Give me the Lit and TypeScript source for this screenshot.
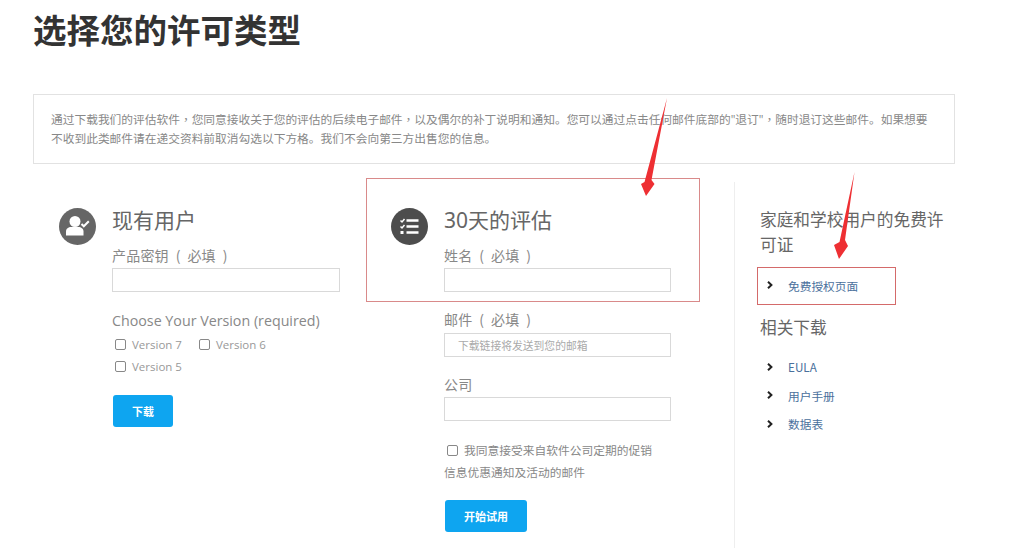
import { LitElement, html, css, svg } from "lit";
import { customElement } from "lit/decorators.js";

const chevron = html`<svg class="chev" viewBox="0 0 6 8" width="6" height="8"><path d="M1 .8 4.400 4 1 7.200" fill="none" stroke="#222" stroke-width="2"/></svg>`;
const comma = html`<span class="tc">，</span>`;

@customElement("app-root")
export class AppRoot extends LitElement {
  static styles = css`
    :host {
      display: block;
      position: relative;
      width: 1024px;
      height: 548px;
      overflow: hidden;
      background: #fff;
      font-family: "Open Sans", "Noto Sans CJK SC", sans-serif;
      color: #777;
    }
    * { box-sizing: border-box; }
    .page { padding: 9px 0 0 33px; width: 955px; }
    h1 {
      margin: 0;
      font-family: "Noto Sans CJK SC", sans-serif;
      font-size: 33.500px;
      line-height: 40px;
      font-weight: 700;
      color: #333;
    }
    .notice {
      margin-top: 45px;
      height: 70px;
      border: 1px solid #e2e2e2;
      padding: 15px 17px 0;
      font-size: 11.720px;
      line-height: 18.600px;
      color: #888;
      font-family: "Open Sans", "Noto Sans CJK SC", sans-serif;
      white-space: nowrap;
    }
    .tc { font-family: "Noto Sans CJK TC", sans-serif; }
    .cols { display: grid; grid-template-columns: 333px 368px 221px; margin-top: 18px; height: 366px; }
    .col { display: flex; gap: 16px; align-items: flex-start; padding-left: 26px; padding-top: 26px; }
    .col + .col { padding-left: 25px; }
    .icon { flex: none; width: 37px; height: 37px; display: block; }
    .form { width: 228px; display: flex; flex-direction: column; align-items: flex-start; margin-top: -1px; }
    .mid .form { width: 227px; }
    h2 {
      margin: 0;
      font-size: 21px;
      line-height: 26px;
      font-weight: 400;
      color: #666;
      font-family: "Noto Sans", "Noto Sans CJK SC", sans-serif;
    }
    .label {
      margin-top: 11px;
      font-size: 14px;
      line-height: 22px;
      color: #888;
      font-family: "Noto Sans CJK SC", sans-serif;
      letter-spacing: .2px;
      word-spacing: 3.500px;
    }
    .label.next { margin-top: 16px; }
    .field {
      display: block;
      margin-top: 2px;
      width: 100%;
      height: 24px;
      border: 1px solid #d9d9d9;
      background: #fff;
      padding: 0 13px;
      font-size: 10.800px;
      line-height: 22px;
      color: #aaa;
      font-family: "Noto Sans CJK SC", sans-serif;
    }
    .field.low { margin-top: 3px; }
    .choose { margin-top: 18px; font-size: 14.250px; line-height: 22px; color: #888; font-weight: 400; }
    .checks { display: flex; flex-wrap: wrap; width: 228px; padding-left: 3px; margin-top: 1px; }
    .check { display: flex; align-items: center; gap: 6px; height: 22px; font-size: 11.500px; color: #999; margin-right: 17px; }
    .box { flex: none; width: 11px; height: 11px; border: 1px solid #888; border-radius: 2px; background: #fff; }
    .break { flex-basis: 100%; height: 0; }
    .btn {
      display: flex; align-items: center; justify-content: center;
      height: 32px; background: #0ea5f0; color: #fff; border-radius: 3px;
      font-size: 11px; font-weight: 700; font-family: "Noto Sans CJK SC", sans-serif;
      margin-left: 1px;
    }
    .btn.small { width: 60px; margin-top: 18px; }
    .btn.wide { width: 82px; margin-top: 17px; }
    .agree { margin-top: 18px; font-size: 11.750px; line-height: 22px; color: #888; font-family: "Noto Sans CJK SC", sans-serif; width: 100%; }
    .agree .row { display: flex; align-items: center; gap: 6px; padding-left: 3px; }
    .side { border-left: 1px solid #eee; padding: 25px 0 0 25px; }
    h3 { margin: 0; font-size: 16.700px; line-height: 25px; font-weight: 400; color: #666; font-family: "Noto Sans CJK SC", sans-serif; }
    ul { list-style: none; margin: 0; padding: 0 0 0 7px; }
    li { display: flex; align-items: center; height: 28.500px; font-size: 11.700px; color: #4a709c; font-family: "Noto Sans CJK SC", sans-serif; }
    .chev { margin-right: 15px; flex: none; }
    .free { margin: 14px 0 15px; }
    h3.dl { margin-bottom: 13px; }
    .mark { position: absolute; border: 1.500px solid #d98a8a; pointer-events: none; }
    .mark.one { left: 366px; top: 178px; width: 334px; height: 124px; }
    .mark.two { left: 757px; top: 267px; width: 139px; height: 38px; border-color: #d46a6a; }
    .arrows { position: absolute; inset: 0; width: 1024px; height: 548px; pointer-events: none; }
  `;

  render() {
    return html`
      <div class="page">
        <h1>选择您的许可类型</h1>
        <div class="notice">通过下载我们的评估软件${comma}您同意接收关于您的评估的后续电子邮件${comma}以及偶尔的补丁说明和通知。您可以通过点击任何邮件底部的"退订"${comma}随时退订这些邮件。如果想要<br />不收到此类邮件请在递交资料前取消勾选以下方格。我们不会向第三方出售您的信息。</div>
        <div class="cols">
          <section class="col">
            <svg class="icon" viewBox="0 0 37 37">
              <circle cx="18.500" cy="18.500" r="18.500" fill="#666"/>
              <circle cx="16" cy="13.500" r="5.500" fill="#fff"/>
              <path d="M7 27.500v-4c0-3 2.500-4.500 5-4.500h7.500c2.500 0 5 1.500 5 4.500v4z" fill="#fff"/>
              <path d="M22.500 16l2.300 2.300 5-5" fill="none" stroke="#fff" stroke-width="2"/>
            </svg>
            <div class="form">
              <h2>现有用户</h2>
              <div class="label">产品密钥 ( 必填 )</div>
              <div class="field"></div>
              <div class="choose">Choose Your Version (required)</div>
              <div class="checks">
                <div class="check"><span class="box"></span>Version 7</div>
                <div class="check"><span class="box"></span>Version 6</div>
                <div class="break"></div>
                <div class="check"><span class="box"></span>Version 5</div>
              </div>
              <div class="btn small">下载</div>
            </div>
          </section>
          <section class="col mid">
            <svg class="icon" viewBox="0 0 37 37">
              <circle cx="18.500" cy="18.500" r="18.500" fill="#4d4d4d"/>
              <g fill="none" stroke="#fff">
                <path d="M15.500 12.500h12M15.500 18.500h12M15.500 24.500h12" stroke-width="2.400"/>
                <path d="M9.500 12.500l1.500 1.500 2.500-3M9.500 18.500l1.500 1.500 2.500-3" stroke-width="1.500"/>
              </g>
              <rect x="9.500" y="23" width="3" height="3" fill="#fff"/>
            </svg>
            <div class="form">
              <h2>30天的评估</h2>
              <div class="label">姓名 ( 必填 )</div>
              <div class="field"></div>
              <div class="label next">邮件 ( 必填 )</div>
              <div class="field low">下载链接将发送到您的邮箱</div>
              <div class="label next">公司</div>
              <div class="field"></div>
              <div class="agree">
                <div class="row"><span class="box"></span>我同意接受来自软件公司定期的促销</div>
                <div>信息优惠通知及活动的邮件</div>
              </div>
              <div class="btn wide">开始试用</div>
            </div>
          </section>
          <aside class="side">
            <h3>家庭和学校用户的免费许可证</h3>
            <ul class="free"><li>${chevron}免费授权页面</li></ul>
            <h3 class="dl">相关下载</h3>
            <ul>
              <li>${chevron}EULA</li>
              <li>${chevron}用户手册</li>
              <li>${chevron}数据表</li>
            </ul>
          </aside>
        </div>
      </div>
      <div class="mark one"></div>
      <div class="mark two"></div>
      <svg class="arrows" viewBox="0 0 1024 548">
        ${svg`<path d="M667 98 651.500 180 654.500 184 646 196 641 184 644.500 182z" fill="#ee2f33"/>
        <path d="M854.500 172 845 240 848 246 839 259 834 245 839.500 242z" fill="#ee2f33"/>`}
      </svg>
    `;
  }
}
